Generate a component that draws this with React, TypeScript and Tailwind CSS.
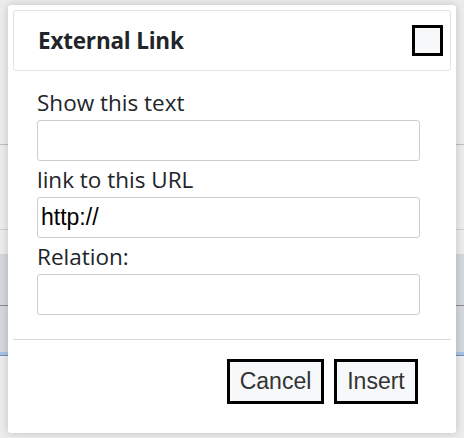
export default function App() {
  return (
    <div className="relative w-[464px] h-[438px] overflow-hidden bg-[#ececec] font-['Open_Sans',sans-serif]">
      {/* page behind the dialog */}
      <div className="h-[144px]" />
      <div className="h-px bg-[#bdbdbd]" />
      <div className="h-[84px]" />
      <div className="h-px bg-[#cfcfcf]" />
      <div className="h-[24px]" />
      <div className="h-[51px] bg-[#d4d7db]" />
      <div className="h-px bg-[#8a8a8a]" />
      <div className="h-[46px] bg-[#d4d7db]" />
      <div className="h-[3px] bg-[#a9c1e4]" />
      <div className="h-px bg-[#6f8fbf]" />

      {/* dialog */}
      <div className="absolute left-[8px] top-[5px] w-[448px] h-[428px] bg-white rounded-[3px] shadow-[0_0_8px_rgba(0,0,0,0.18)] flex flex-col">
        <div className="mx-[5px] mt-[5px] h-[61px] border border-[#e2e2e2] rounded-[3px] flex items-center justify-between pl-[24px] pr-[7px]">
          <h1 className="text-[22.5px] leading-[30px] font-bold text-[#212529] tracking-[-0.2px]">External Link</h1>
          <button className="w-[31px] h-[31px] border-[3px] border-black bg-[#f7f8fa]" />
        </div>

        <div className="flex flex-col pl-[29px] pr-[36px] pt-[17px]">
          <label className="text-[22.5px] leading-[30px] text-[#212529] h-[32px]">Show this text</label>
          <input className="h-[41px] border border-[#cdcdcd] rounded-[3px] outline-none" />
          <label className="text-[22.5px] leading-[30px] text-[#212529] h-[36px] pt-[4px]">link to this URL</label>
          <input
            defaultValue="http://"
            className="h-[41px] border border-[#cdcdcd] rounded-[3px] outline-none pl-[3px] text-[23px] text-black font-['Liberation_Sans',sans-serif]"
          />
          <label className="text-[22.5px] leading-[30px] text-[#212529] h-[36px] pt-[4px]">Relation:</label>
          <input className="h-[41px] border border-[#cdcdcd] rounded-[3px] outline-none" />
        </div>

        <div className="mx-[5px] mt-[24px] h-px bg-[#d6d6d6]" />

        <div className="flex justify-end gap-[10px] pr-[38px] pt-[19px]">
          <button className="h-[45px] w-[97px] border-[3px] border-black bg-[#f7f8fa] text-[23px] text-[#333] font-['Liberation_Sans',sans-serif]">
            Cancel
          </button>
          <button className="h-[45px] w-[84px] border-[3px] border-black bg-[#f7f8fa] text-[23px] text-[#333] font-['Liberation_Sans',sans-serif]">
            Insert
          </button>
        </div>
      </div>
    </div>
  )
}
